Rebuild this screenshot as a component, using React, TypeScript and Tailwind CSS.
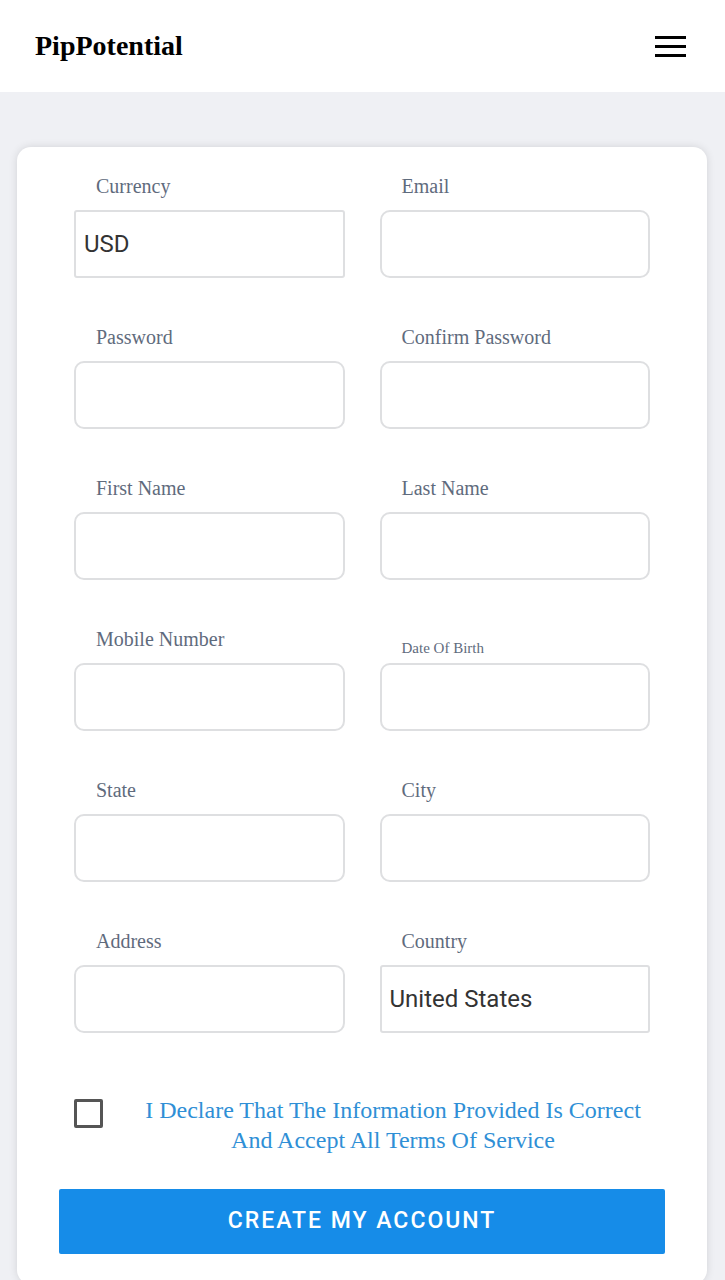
import { useState } from 'react';

const serif = { fontFamily: '"Liberation Serif", "DejaVu Serif", serif' };
const sans = { fontFamily: 'Roboto, "Liberation Sans", sans-serif' };

type Field = { label: string; value?: string; select?: boolean; small?: boolean };

const fields: Field[] = [
  { label: 'Currency', value: 'USD', select: true },
  { label: 'Email' },
  { label: 'Password' },
  { label: 'Confirm Password' },
  { label: 'First Name' },
  { label: 'Last Name' },
  { label: 'Mobile Number' },
  { label: 'Date Of Birth', small: true },
  { label: 'State' },
  { label: 'City' },
  { label: 'Address' },
  { label: 'Country', value: 'United States', select: true },
];

function FormField({ field }: { field: Field }) {
  return (
    <div className="flex flex-col">
      <div className="flex h-[63px] items-end pb-[14px] pl-[22px]">
        <span
          style={serif}
          className={
            field.small
              ? '-mb-[7px] text-[15px] leading-none text-[#5f6b7d]'
              : 'text-[20px] leading-none text-[#5f6b7d]'
          }
        >
          {field.label}
        </span>
      </div>
      <div
        style={sans}
        className={
          'flex h-[68px] items-center border-2 border-[#dedfe1] bg-white px-[8px] text-[24px] text-[#333] ' +
          (field.select ? 'rounded-[3px]' : 'rounded-[10px]')
        }
      >
        {field.value}
      </div>
    </div>
  );
}

export default function App() {
  const [checked, setChecked] = useState(false);

  return (
    <div className="min-h-[1280px] bg-[#eff0f4]">
      {/* Header */}
      <header className="flex h-[92px] items-center justify-between bg-white pl-[35px] pr-[39px]">
        <span style={serif} className="text-[28px] font-bold text-black">
          PipPotential
        </span>
        <div className="flex w-[31px] flex-col gap-[6px]">
          <span className="h-[3px] w-full bg-black" />
          <span className="h-[3px] w-full bg-black" />
          <span className="h-[3px] w-full bg-black" />
        </div>
      </header>

      {/* Card */}
      <div className="pl-[17px] pr-[18px] pt-[55px]">
        <div className="rounded-[14px] bg-white pb-[30px] shadow-[0_0_8px_rgba(0,0,0,0.12)]">
          <div className="grid grid-cols-2 gap-x-[35px] gap-y-[20px] px-[57px]">
            {fields.map((f) => (
              <FormField key={f.label} field={f} />
            ))}
          </div>

          {/* Declaration */}
          <div className="mt-[66px] flex items-start pl-[57px] pr-[54px]">
            <button
              onClick={() => setChecked(!checked)}
              className="h-[29px] w-[29px] shrink-0 rounded-[2px] border-[3px] border-[#555]"
            />
            <p
              style={serif}
              className="-mt-[4px] ml-[30px] flex-1 text-center text-[24px] leading-[30px] text-[#2f8fd6]"
            >
              I Declare That The Information Provided Is Correct And Accept All Terms Of Service
            </p>
          </div>

          <div className="mt-[34px] px-[42px]">
            <button
              style={sans}
              className="h-[65px] w-full rounded-[2px] bg-[#168ce8] text-[23px] font-medium tracking-[2px] text-white"
            >
              CREATE MY ACCOUNT
            </button>
          </div>
        </div>
      </div>
    </div>
  );
}
